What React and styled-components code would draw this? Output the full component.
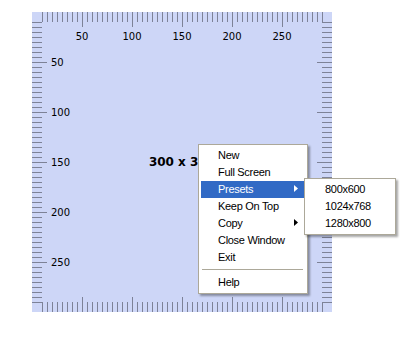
import React from 'react'
import styled, {createGlobalStyle} from 'styled-components'

const GlobalStyle = createGlobalStyle`
  html, body {
    margin: 0;
    padding: 0;
    background: #ffffff;
  }
  body {
    font-family: "DejaVu Sans", Verdana, sans-serif;
  }
`

const SIZE = 300
const offsets = []
for (let o = 10; o <= 290; o += 5) offsets.push(o)
const labels = [50, 100, 150, 200, 250]

const menuItems = [
  {label: 'New'},
  {label: 'Full Screen'},
  {label: 'Presets', sub: ['800x600', '1024x768', '1280x800'], active: true},
  {label: 'Keep On Top'},
  {label: 'Copy', sub: []},
  {label: 'Close Window'},
  {label: 'Exit'},
  {separator: true},
  {label: 'Help'},
]

function Ruler() {
  const len = (o) => (o % 50 === 0 ? 15 : 10)
  return (
    <RulerSvg width={SIZE} height={SIZE} viewBox={`0 0 ${SIZE} ${SIZE}`}>
      <g stroke="#7d8297" strokeWidth="1" shapeRendering="crispEdges">
        {offsets.map((o) => (
          <React.Fragment key={o}>
            <line x1={o + 0.5} y1={0} x2={o + 0.5} y2={len(o)} />
            <line x1={o + 0.5} y1={SIZE} x2={o + 0.5} y2={SIZE - len(o)} />
            <line x1={0} y1={o + 0.5} x2={len(o)} y2={o + 0.5} />
            <line x1={SIZE} y1={o + 0.5} x2={SIZE - len(o)} y2={o + 0.5} />
          </React.Fragment>
        ))}
      </g>
      <g fill="#000" fontFamily='"DejaVu Sans", Verdana, sans-serif' fontSize="10">
        {labels.map((n) => (
          <text key={'t' + n} x={n} y={28} textAnchor="middle">{n}</text>
        ))}
        {labels.map((n) => (
          <text key={'l' + n} x={19} y={n + 4}>{n}</text>
        ))}
      </g>
    </RulerSvg>
  )
}

function Arrow({light}) {
  return (
    <svg width="4" height="7" viewBox="0 0 4 7">
      <path d="M0 0 L4 3.5 L0 7 Z" fill={light ? '#ffffff' : '#000000'} />
    </svg>
  )
}

function App() {
  return (
    <>
      <GlobalStyle />
      <Page>
        <Window>
          <Ruler />
          <SizeLabel>300 x 300</SizeLabel>
          <Menu>
            {menuItems.map((item, i) =>
              item.separator ? (
                <Separator key={i} />
              ) : (
                <Item key={i} $active={item.active}>
                  <span>{item.label}</span>
                  {item.sub && <Arrow light={item.active} />}
                  {item.active && (
                    <SubMenu>
                      {item.sub.map((s) => (
                        <SubItem key={s}>{s}</SubItem>
                      ))}
                    </SubMenu>
                  )}
                </Item>
              )
            )}
          </Menu>
        </Window>
      </Page>
    </>
  )
}

const Page = styled.div`
  width: 417px;
  height: 341px;
  padding: 12px 0 0 32px;
  box-sizing: border-box;
`

const Window = styled.div`
  position: relative;
  width: 300px;
  height: 300px;
  background: #cdd6f7;
  display: grid;
  place-items: center;

  & > * {
    grid-area: 1 / 1;
  }
`

const RulerSvg = styled.svg`
  display: block;
  align-self: start;
  justify-self: start;
`

const SizeLabel = styled.div`
  font-family: "DejaVu Sans", Verdana, sans-serif;
  font-weight: bold;
  font-size: 12px;
  color: #000;
`

const Menu = styled.div`
  position: absolute;
  left: 166px;
  top: 132px;
  width: 110px;
  box-sizing: border-box;
  background: #ffffff;
  border: 1px solid #aca899;
  padding: 2px 3px 2px 2px;
  box-shadow: 2px 2px 2px rgba(0, 0, 0, 0.35);
  font-family: "Liberation Sans", Tahoma, sans-serif;
  font-size: 11px;
  letter-spacing: -0.3px;
`

const Item = styled.div`
  position: relative;
  height: 17px;
  box-sizing: border-box;
  display: flex;
  align-items: center;
  justify-content: space-between;
  padding: 0 6px 2px 17px;
  background: ${(p) => (p.$active ? '#316ac5' : 'transparent')};
  color: ${(p) => (p.$active ? '#ffffff' : '#000000')};
`

const Separator = styled.div`
  height: 1px;
  margin: 3px 1px 4px 1px;
  background: #aca899;
`

const SubMenu = styled.div`
  position: absolute;
  left: 100%;
  top: -3px;
  width: 92px;
  box-sizing: border-box;
  background: #ffffff;
  border: 1px solid #aca899;
  padding: 2px;
  box-shadow: 2px 2px 2px rgba(0, 0, 0, 0.35);
  color: #000;
`

const SubItem = styled.div`
  height: 17px;
  box-sizing: border-box;
  display: flex;
  align-items: center;
  padding: 0 0 2px 18px;
`

export default App
